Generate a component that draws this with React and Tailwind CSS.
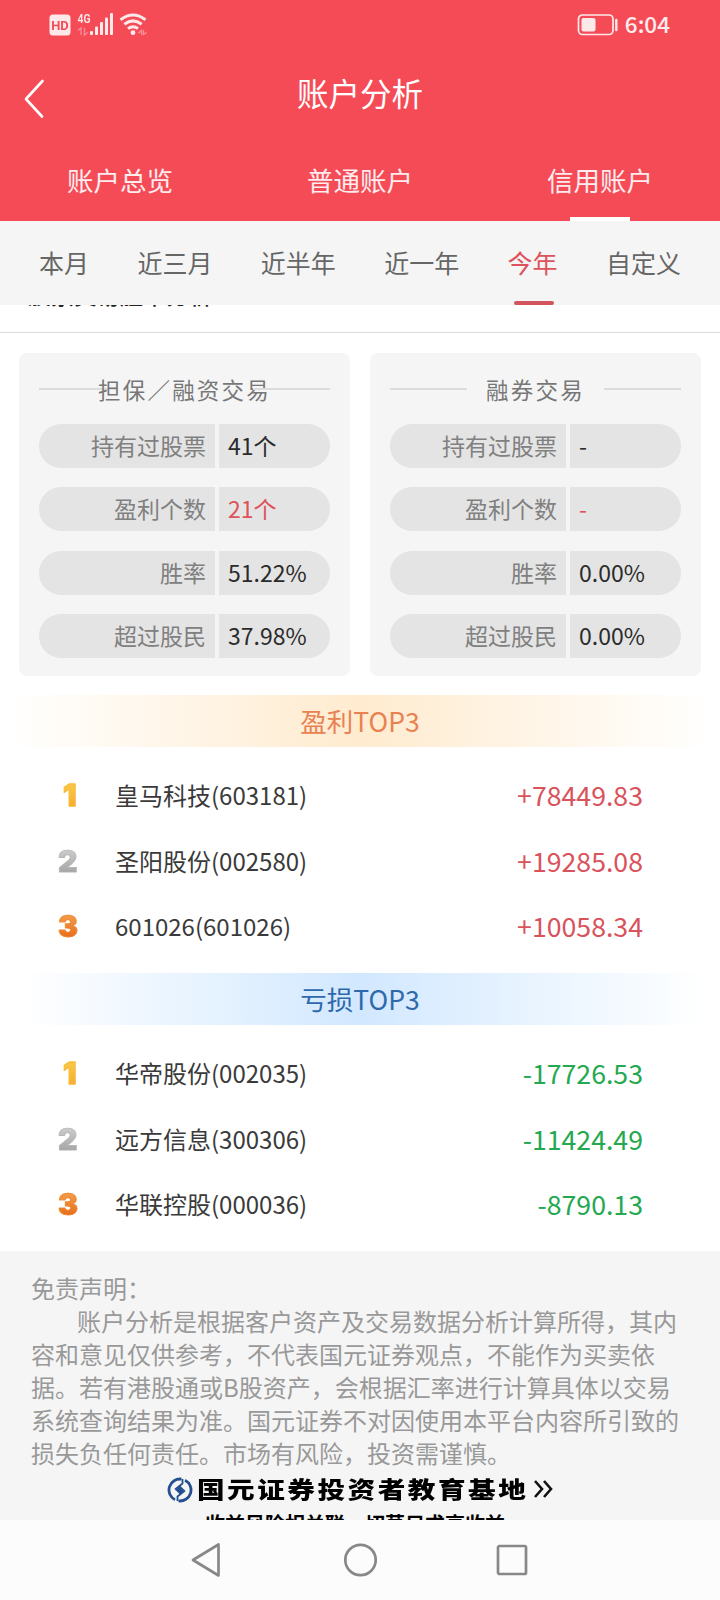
import clsx from "clsx";

const accountTabs = ["账户总览", "普通账户", "信用账户"];
const periods = ["本月", "近三月", "近半年", "近一年", "今年", "自定义"];

const longStats = [
  { label: "持有过股票", value: "41个" },
  { label: "盈利个数", value: "21个", red: true },
  { label: "胜率", value: "51.22%" },
  { label: "超过股民", value: "37.98%" },
];

const shortStats = [
  { label: "持有过股票", value: "-" },
  { label: "盈利个数", value: "-", red: true },
  { label: "胜率", value: "0.00%" },
  { label: "超过股民", value: "0.00%" },
];

const winners = [
  { name: "皇马科技(603181)", amount: "+78449.83" },
  { name: "圣阳股份(002580)", amount: "+19285.08" },
  { name: "601026(601026)", amount: "+10058.34" },
];

const losers = [
  { name: "华帝股份(002035)", amount: "-17726.53" },
  { name: "远方信息(300306)", amount: "-11424.49" },
  { name: "华联控股(000036)", amount: "-8790.13" },
];

const rankColors = [
  "pl-[5px] from-[#f8cd48] to-[#f8a92c] [-webkit-text-stroke:0.8px_#f9b93a]",
  "from-[#cfcfcf] to-[#a3a3a3] [-webkit-text-stroke:0.6px_#b5b5b5]",
  "from-[#f5a04a] to-[#e56a12] [-webkit-text-stroke:0.6px_#ee8630]",
];

function StatusBar() {
  return (
    <div className="flex h-12 items-center justify-between pl-[49px] pr-[50px]">
      <svg width="100" height="48" viewBox="49 0 100 48" fill="#fff" opacity="0.88">
        <rect x="49.5" y="14.5" width="21" height="21" rx="3.5" />
        <text x="60" y="29.8" fontSize="13.5" fontWeight="700" textAnchor="middle" textLength="17.5" lengthAdjust="spacingAndGlyphs" fill="#f44c59" className="font-['Roboto',sans-serif]">HD</text>
        <text x="77.5" y="22.8" fontSize="12.8" fontWeight="600" textLength="13" lengthAdjust="spacingAndGlyphs" className="font-['Roboto',sans-serif]">4G</text>
        {/* data arrows */}
        <path d="M78 30.5l3-2.5v7M84.5 28v7l3.5-2.7" fill="none" stroke="#fff" strokeWidth="1.4" opacity="0.4" />
        <rect x="90" y="31" width="3" height="4" rx="1" />
        <rect x="95" y="26.5" width="3" height="8.5" rx="1" />
        <rect x="100" y="22" width="3" height="13" rx="1" />
        <rect x="105" y="17.5" width="3" height="17.5" rx="1" />
        <rect x="110" y="13" width="3" height="22" rx="1" />
        {/* wifi */}
        <g fill="none" stroke="#fff" strokeWidth="3">
          <path d="M120.5 19.8q12.5-9.6 25 0" />
          <path d="M124.3 24.2q8.7-6.6 17.4 0" />
          <path d="M128 28.6q5-3.8 10 0" />
        </g>
        <circle cx="133" cy="32.7" r="2.4" />
        <path d="M138.5 33l3-2.5v4.5M143.5 30v4.5l3-2" fill="none" stroke="#fff" strokeWidth="1.3" opacity="0.45" />
      </svg>
      <div className="flex items-center gap-[7px]">
        <svg className="mt-px" width="41" height="22" viewBox="0 0 41 22" fill="none" opacity="0.88">
          <rect x="1.5" y="1" width="34.5" height="19.5" rx="4" stroke="#fff" strokeWidth="1.7" />
          <rect x="4.5" y="4" width="14" height="13.5" rx="2" fill="#fff" />
          <path d="M39.3 6v10" stroke="#fff" strokeWidth="2.4" strokeLinecap="round" />
        </svg>
        <span className="-mt-0.5 text-[22.5px] font-medium leading-none text-white/90">6:04</span>
      </div>
    </div>
  );
}

function Header() {
  return (
    <header className="flex h-[221px] flex-col bg-[#f54b57] text-white">
      <StatusBar />
      <div className="grid h-[91px] grid-cols-[1fr_auto_1fr] items-center">
        <svg className="ml-6 mt-[10px]" width="22" height="40" viewBox="0 0 22 40" fill="none" stroke="#fff" strokeWidth="2.6" strokeLinecap="round" strokeLinejoin="round">
          <path d="M18.5 2L2 20l16 17.5" />
        </svg>
        <h1 className="-mt-0.5 text-[31.5px] leading-none">账户分析</h1>
      </div>
      <nav className="grid h-[82px] grid-cols-3">
        {accountTabs.map((tab, i) => (
          <div key={tab} className="flex flex-col items-center justify-between pt-[25px]">
            <span className="text-[26.5px] leading-8 text-white/90">{tab}</span>
            {i === 2 && <span className="h-1 w-[60px] bg-white" />}
          </div>
        ))}
      </nav>
    </header>
  );
}

function PeriodBar() {
  return (
    <nav className="flex h-[84px] justify-between bg-[#f5f5f5] px-[39px]">
      {periods.map((p) => (
        <div
          key={p}
          className={clsx("flex flex-col items-center justify-between pt-[25px] text-[25px] leading-8", p === "今年" ? "text-[#dd525b]" : "text-[#666]")}
        >
          <span>{p}</span>
          {p === "今年" && <span className="ml-0.5 h-1 w-10 rounded-full bg-[#d2555e]" />}
        </div>
      ))}
    </nav>
  );
}

function StatCard({ title, stats }) {
  return (
    <section className="h-[323px] flex-1 rounded-lg bg-[#f5f5f5] px-5 pt-5">
      <div className="flex h-8 items-center justify-between">
        <span className="h-0.5 w-[77px] bg-[#dcdcdc]" />
        <h2 className="-mx-10 whitespace-nowrap text-[22.5px] leading-8 tracking-[2.2px] text-[#777]">{title}</h2>
        <span className="h-0.5 w-[77px] bg-[#dcdcdc]" />
      </div>
      <div className="mt-[19px] flex flex-col gap-[19.3px]">
        {stats.map((s) => (
          <div key={s.label} className="flex h-11 gap-1 text-[23px] leading-[42px]">
            <div className="w-44 rounded-l-full bg-[#e4e4e4] pr-[9px] text-right text-[#808080]">{s.label}</div>
            <div className={clsx("flex-1 rounded-r-full bg-[#e4e4e4] pl-[9px]", s.red ? "text-[#dd525b]" : "text-[#2b2b2b]")}>{s.value}</div>
          </div>
        ))}
      </div>
    </section>
  );
}

function Ranking({ rows, color }) {
  return (
    <ul className="flex h-[226px] flex-col pt-[15.3px]">
      {rows.map((row, i) => (
        <li key={row.name} className="flex h-[65.5px] items-center pl-[58px] pr-[77px]">
          <span className={clsx("w-[57px] bg-linear-to-b bg-clip-text font-['Inter',sans-serif] text-[30px] font-black leading-[26px] text-transparent", rankColors[i])}>
            {i + 1}
          </span>
          <span className="flex-1 text-[24px] leading-8 text-[#3a3a3a]">{row.name}</span>
          <span className={clsx("text-[26.7px] leading-8", color)}>{row.amount}</span>
        </li>
      ))}
    </ul>
  );
}

function Footer() {
  return (
    <footer className="h-[269px] overflow-hidden bg-[#f5f5f5] pl-[31px] pt-5">
      <div className="whitespace-nowrap text-[24px] leading-[33px] text-[#999]">
        <p>免责声明：</p>
        <p className="indent-[46px]">
          账户分析是根据客户资产及交易数据分析计算所得，其内
          <br />
          容和意见仅供参考，不代表国元证券观点，不能作为买卖依
          <br />
          据。若有港股通或B股资产，会根据汇率进行计算具体以交易
          <br />
          系统查询结果为准。国元证券不对因使用本平台内容所引致的
          <br />
          损失负任何责任。市场有风险，投资需谨慎。
        </p>
      </div>
      <div className="ml-[136px] mt-[5px] flex h-8 items-center">
        <svg width="26" height="26" viewBox="0 0 26 26" fill="none">
          <g stroke="#24508f" strokeWidth="2.8">
            <path d="M14.5 2.100A11 11 0 0 0 8 22.800" />
            <path d="M11.500 23.900A11 11 0 0 0 18 3.200" />
            <path d="M15.500 2v4.500L8 12.500M10.500 24v-4.500l7.500-6" strokeWidth="1.800" />
          </g>
          <path d="M13 8.500l4.500 4.500-4.500 4.500L8.500 13z" fill="#24508f" />
        </svg>
        <span className="-mt-1 ml-[4px] w-[337px] whitespace-nowrap">
          <span className="inline-block origin-left scale-x-[1.2] text-[23px] font-black leading-8 tracking-[2.1px] text-black">国元证券投资者教育基地</span>
        </span>
        <svg className="-mt-0.5" width="20" height="18" viewBox="0 0 20 18" fill="none" stroke="#111" strokeWidth="2.6">
          <path d="M1 1l7 8-7 8M10 1l7 8-7 8" />
        </svg>
      </div>
      <p className="ml-[174px] mt-0.5 whitespace-nowrap text-[20px] font-bold leading-8 text-black">收益风险相关联，切莫只求高收益</p>
    </footer>
  );
}

function SystemNav() {
  return (
    <div className="flex h-20 items-center justify-between bg-[#fcfcfc] pl-[191px] pr-[192px]">
      <svg width="32" height="36" viewBox="0 0 32 36" fill="none" stroke="#888" strokeWidth="2.7" strokeLinejoin="round">
        <path d="M27.5 2.5v31L2 18z" />
      </svg>
      <svg width="34" height="34" viewBox="0 0 34 34" fill="none" stroke="#888" strokeWidth="2.7">
        <circle cx="17.5" cy="17" r="15.2" />
      </svg>
      <svg width="32" height="32" viewBox="0 0 32 32" fill="none" stroke="#888" strokeWidth="2.7">
        <rect x="2" y="2" width="28" height="28" rx="1.5" />
      </svg>
    </div>
  );
}

export default function App() {
  return (
    <main className="flex h-[1600px] w-[720px] flex-col overflow-hidden bg-white font-['Noto_Sans_CJK_SC',sans-serif]">
      <Header />
      <PeriodBar />

      {/* section title, scrolled under the period bar */}
      <div className="flex h-7 items-start overflow-hidden border-b border-[#dcdcdc] pl-7">
        <p className="-mt-[27px] text-[23px] font-medium leading-8 text-[#222]">股票交易胜率分析</p>
      </div>

      <div className="flex gap-5 px-[19px] pt-5">
        <StatCard title="担保／融资交易" stats={longStats} />
        <StatCard title="融券交易" stats={shortStats} />
      </div>

      <h3 className="mt-[19px] h-[52px] bg-linear-to-r from-white from-1% via-[#ffebcf] to-white to-99% text-center text-[26.5px] leading-[51px] text-[#e88250]">盈利TOP3</h3>
      <Ranking rows={winners} color="text-[#d9535c]" />

      <h3 className="h-[52px] bg-linear-to-r from-white from-3% via-[#d2e8ff] to-white to-98% text-center text-[26.5px] leading-[51px] text-[#2f69ab]">亏损TOP3</h3>
      <Ranking rows={losers} color="text-[#24a850]" />

      <Footer />
      <SystemNav />
    </main>
  );
}
